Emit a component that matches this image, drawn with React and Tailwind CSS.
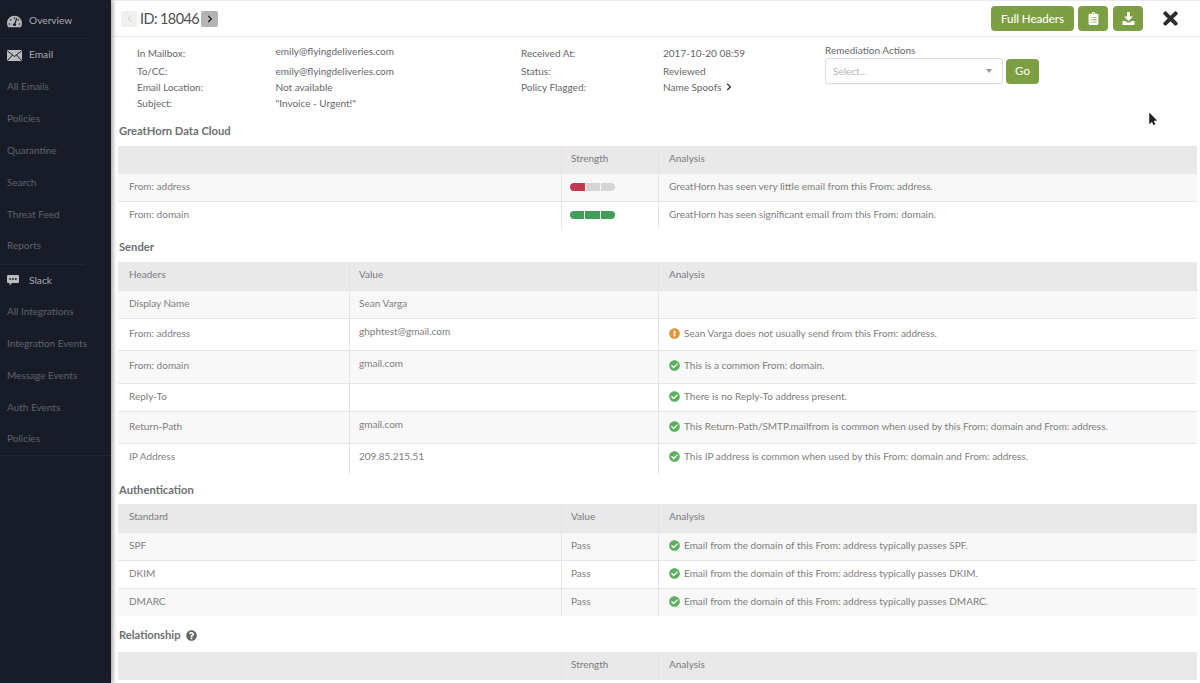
import React from "react";
import { FaTachometerAlt, FaTimes, FaChevronRight, FaChevronLeft, FaCheckCircle, FaExclamationCircle, FaQuestionCircle, FaClipboardList, FaMousePointer } from "react-icons/fa";

function MailIcon() {
  return (
    <svg width="15" height="11" viewBox="0 0 15 11">
      <rect x="0" y="0" width="15" height="11" rx="0.8" fill="#b9bbbf" />
      <path d="M0.5 1 L7.5 6.5 L14.5 1 M0.5 10.5 L5.5 5 M14.5 10.5 L9.5 5" fill="none" stroke="#181c29" strokeWidth="1" />
    </svg>
  );
}
function ChatIcon() {
  return (
    <svg width="12" height="11" viewBox="0 0 12 11">
      <path d="M1.2 0 H10.8 A1.2 1.2 0 0 1 12 1.2 V6.8 A1.2 1.2 0 0 1 10.8 8 H5 L2.5 10.5 V8 H1.2 A1.2 1.2 0 0 1 0 6.8 V1.2 A1.2 1.2 0 0 1 1.2 0 Z" fill="#b9bbbf" />
      <circle cx="3.2" cy="4" r="0.9" fill="#181c29" />
      <circle cx="6" cy="4" r="0.9" fill="#181c29" />
      <circle cx="8.8" cy="4" r="0.9" fill="#181c29" />
    </svg>
  );
}
function DownloadIcon() {
  return (
    <svg width="13" height="13" viewBox="0 0 13 13" fill="white">
      <path d="M5 0 H8 V4.5 H11 L6.5 9 L2 4.5 H5 Z" />
      <path d="M0.5 9 H3.5 L5 10.5 H8 L9.5 9 H12.5 V13 H0.5 Z" />
    </svg>
  );
}

function NavHead({ icon, label, h, sep }) {
  return (
    <div className={`flex items-center pl-[7px] text-[10.2px] text-[#a9abb0] ${h} ${sep ? "border-b border-[#232733] w-[88px]" : ""}`}>
      <span className="w-[21px] flex justify-start text-[#b4b6ba] text-[15px]">{icon}</span>
      <span className="ml-[1px]">{label}</span>
    </div>
  );
}
function NavItem({ label }) {
  return <div className="h-[31.8px] flex items-center pl-[7px] text-[10px] text-[#5f636c]">{label}</div>;
}

function Check({ warn }) {
  return warn
    ? <FaExclamationCircle className="text-[#e0963a] text-[11px] mr-[4px] shrink-0" />
    : <FaCheckCircle className="text-[#5cb05f] text-[11px] mr-[4px] shrink-0" />;
}

function Strength({ level }) {
  if (level === "low") {
    return (
      <div className="flex h-[8px] w-[45px] -ml-[1px] mt-[2px] rounded-full overflow-hidden gap-[1px]">
        <div className="w-[15px] bg-[#c23a52]" />
        <div className="w-[14px] bg-[#d5d5d5]" />
        <div className="flex-1 bg-[#d5d5d5]" />
      </div>
    );
  }
  return (
    <div className="flex h-[8px] w-[45px] -ml-[1px] mt-[2px] rounded-full overflow-hidden gap-[1px]">
      <div className="flex-1 bg-[#3f9e5a]" />
      <div className="flex-1 bg-[#3f9e5a]" />
      <div className="flex-1 bg-[#3f9e5a]" />
    </div>
  );
}

function Row({ cols, cells, h, bg, header, pad = "pb-[3px]" }) {
  return (
    <div className={`grid ${cols} ${h} ${bg} ${header ? "text-[#777b7f]" : "border-t border-[#e6e6e6] text-[#7d7d7d]"} text-[10px]`}>
      {cells.map((c, i) => (
        <div key={i} className={`flex items-center ${pad} ${i === 0 ? "pl-[11px]" : i === 1 ? "pl-[9px] border-l border-[#e3e3e3]" : "pl-[10px] border-l border-[#e3e3e3]"}`}>{c}</div>
      ))}
    </div>
  );
}

function Title({ children, className }) {
  return <div className={`pl-[1px] text-[11.2px] font-bold text-[#6d6f72] flex items-center ${className}`}>{children}</div>;
}

function Meta({ first, items }) {
  return (
    <div className="flex flex-col">
      {items.map((t, i) => (
        <div key={i} className={`flex items-center ${i === 0 ? first : i === 1 ? (first === "h-[18px]" ? "h-[14px] mt-[2px]" : "h-[14px] mt-[6px]") : "h-[14px] mt-[2px]"}`}>{t}</div>
      ))}
    </div>
  );
}

const A = ({ t, warn }) => <span className="flex items-center"><Check warn={warn} />{t}</span>;
const V = ({ t }) => <span className="-mt-[4px]">{t}</span>;

export default function App() {
  const c1 = "grid-cols-[443px_97px_539px]";
  const c2 = "grid-cols-[231px_309px_539px]";
  return (
    <div className="relative flex h-[683px] w-[1200px] overflow-hidden bg-white" style={{ fontFamily: "Lato, 'Open Sans', sans-serif" }}>
      <aside className="w-[111px] shrink-0 bg-[#181c29] shadow-[2px_0_4px_rgba(0,0,0,0.35)] z-10">
        <NavHead icon={<FaTachometerAlt />} label="Overview" h="h-[39px] pt-[4px]" sep />
        <NavHead icon={<MailIcon />} label="Email" h="h-[32px]" />
        <NavItem label="All Emails" />
        <NavItem label="Policies" />
        <NavItem label="Quarantine" />
        <NavItem label="Search" />
        <NavItem label="Threat Feed" />
        <NavItem label="Reports" />
        <div className="h-[1px] w-[85px] bg-[#232733] mt-[2px]" />
        <NavHead icon={<ChatIcon />} label="Slack" h="h-[31px]" />
        <NavItem label="All Integrations" />
        <NavItem label="Integration Events" />
        <NavItem label="Message Events" />
        <NavItem label="Auth Events" />
        <NavItem label="Policies" />
        <div className="h-[1px] w-[111px] bg-[#232733]" />
      </aside>

      <main className="flex-1 min-w-0">
        <header className="h-[37px] border-y border-[#ececec] flex items-center pl-[10px] pr-[16px]">
          <span className="w-[16px] h-[16px] rounded-[2px] bg-[#f0f0f0] flex items-center justify-center text-[#d8d8d8] text-[7px]"><FaChevronLeft /></span>
          <span className="ml-[3px] text-[14.5px] tracking-[-0.6px] text-[#4d4f52]">ID: 18046</span>
          <span className="ml-[2px] w-[17px] h-[16px] rounded-[2px] bg-[#b4b4b4] flex items-center justify-center text-[#111] text-[8px]"><FaChevronRight /></span>
          <div className="ml-auto flex items-center">
            <button className="h-[25px] w-[83px] rounded-[4px] bg-[#7d9f43] text-white text-[11.5px] font-medium">Full Headers</button>
            <button className="ml-[4px] h-[25px] w-[30px] rounded-[4px] bg-[#7d9f43] text-white text-[13px] flex items-center justify-center"><FaClipboardList /></button>
            <button className="ml-[5px] h-[25px] w-[30px] rounded-[4px] bg-[#7d9f43] flex items-center justify-center"><DownloadIcon /></button>
            <FaTimes className="ml-[17px] mr-[3px] text-[#2c2c2c] text-[21px]" />
          </div>
        </header>

        <section className="relative h-[76px] text-[10px] text-[#64666a] grid grid-cols-[138.5px_245.5px_142px_162px_1fr] pl-[26px] pr-[4px] pt-[7px]">
          <Meta first="h-[18px]" items={["In Mailbox:", "To/CC:", "Email Location:", "Subject:"]} />
          <Meta first="h-[14px]" items={["emily@flyingdeliveries.com", "emily@flyingdeliveries.com", "Not available", "\"Invoice - Urgent!\""]} />
          <Meta first="h-[18px]" items={["Received At:", "Status:", "Policy Flagged:"]} />
          <Meta first="h-[18px]" items={["2017-10-20 08:59", "Reviewed", <>Name Spoofs<FaChevronRight className="ml-[3px] text-[8px] text-[#222]" /></>]} />
          <div className="-mt-[1px]">
            <div className="h-[15px] flex items-center">Remediation Actions</div>
            <div className="flex items-center">
              <div className="h-[26px] w-[178px] rounded-[3px] border border-[#dcdcdc] flex items-center justify-between pl-[7px] pr-[10px] text-[#b5b5b5] shadow-[0_1px_1px_rgba(0,0,0,0.05)]">
                <span>Select...</span>
                <span className="w-0 h-0 border-x-[3px] border-x-transparent border-t-[4px] border-t-[#999]" />
              </div>
              <button className="ml-[3px] h-[25px] w-[33px] rounded-[4px] bg-[#7d9f43] text-white text-[11.5px]">Go</button>
            </div>
          </div>
        </section>

        <div className="pl-[7px] pr-[3px]">
          <Title className="h-[33px] pt-[3px]">GreatHorn Data Cloud</Title>
          <Row header cols={c1} h="h-[27px]" bg="bg-[#e9e9e9]" cells={["", "Strength", "Analysis"]} />
          <Row cols={c1} h="h-[28px]" bg="bg-[#f8f8f8]" cells={["From: address", <Strength level="low" />, "GreatHorn has seen very little email from this From: address."]} />
          <Row cols={c1} h="h-[28px]" bg="bg-white" cells={["From: domain", <Strength level="high" />, "GreatHorn has seen significant email from this From: domain."]} />

          <Title className="h-[33px] pt-[4px]">Sender</Title>
          <Row header cols={c2} h="h-[28px]" bg="bg-[#e9e9e9]" cells={["Headers", "Value", "Analysis"]} />
          <Row cols={c2} h="h-[28px]" bg="bg-[#f8f8f8]" cells={["Display Name", "Sean Varga", ""]} />
          <Row cols={c2} h="h-[32px]" bg="bg-white" cells={["From: address", <V t="ghphtest@gmail.com" />, <A warn t="Sean Varga does not usually send from this From: address." />]} />
          <Row cols={c2} h="h-[33px]" bg="bg-[#f8f8f8]" cells={["From: domain", <V t="gmail.com" />, <A t="This is a common From: domain." />]} />
          <Row cols={c2} h="h-[28px]" bg="bg-white" cells={["Reply-To", "", <A t="There is no Reply-To address present." />]} />
          <Row cols={c2} h="h-[32px]" bg="bg-[#f8f8f8]" cells={["Return-Path", <V t="gmail.com" />, <A t="This Return-Path/SMTP.mailfrom is common when used by this From: domain and From: address." />]} />
          <Row cols={c2} h="h-[32px]" bg="bg-white" pad="pb-[6px]" cells={["IP Address", "209.85.215.51", <A t="This IP address is common when used by this From: domain and From: address." />]} />

          <Title className="h-[29px] pt-[1px]">Authentication</Title>
          <Row header cols={c1} h="h-[28px]" bg="bg-[#e9e9e9]" cells={["Standard", "Value", "Analysis"]} />
          <Row cols={c1} h="h-[28px]" bg="bg-[#f8f8f8]" cells={["SPF", "Pass", <A t="Email from the domain of this From: address typically passes SPF." />]} />
          <Row cols={c1} h="h-[28px]" bg="bg-white" cells={["DKIM", "Pass", <A t="Email from the domain of this From: address typically passes DKIM." />]} />
          <Row cols={c1} h="h-[28px]" bg="bg-[#f8f8f8]" cells={["DMARC", "Pass", <A t="Email from the domain of this From: address typically passes DMARC." />]} />

          <Title className="h-[36px] pt-[2px]">Relationship<FaQuestionCircle className="ml-[5px] text-[11px] text-[#666]" /></Title>
          <Row header cols={c1} h="h-[28px]" bg="bg-[#e9e9e9]" cells={["", "Strength", "Analysis"]} />
        </div>
      </main>
      <FaMousePointer className="absolute left-[1147px] top-[113px] text-[#222] text-[12px]" />
    </div>
  );
}
